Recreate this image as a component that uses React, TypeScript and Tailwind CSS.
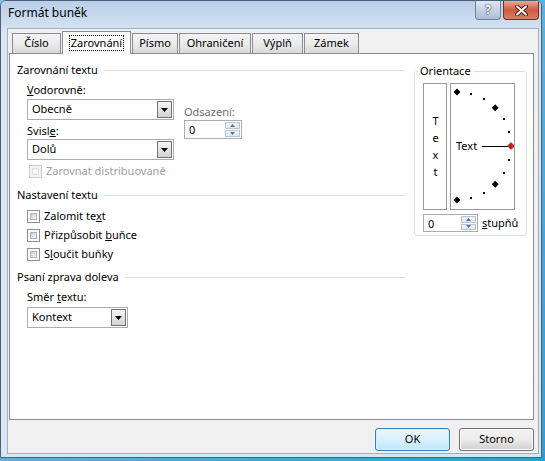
import React from 'react';

function Tab({ label, className, active }: { label: string; className: string; active?: boolean }) {
  if (active) {
    return (
      <div className={`relative z-10 h-[23px] bg-white border border-b-0 border-[#898c95] flex items-start justify-center pt-[3px] ${className}`}>
        <span className="border border-dotted border-black px-px leading-[14px]">{label}</span>
      </div>
    );
  }
  return (
    <div className={`h-[20px] mb-px border border-b-0 border-[#898c95] bg-gradient-to-b from-[#f4f4f4] via-[#ebebeb] to-[#d9d9d9] flex items-center justify-center ${className}`}>
      {label}
    </div>
  );
}

function GroupHead({ children, className = '' }: { children: React.ReactNode; className?: string }) {
  return (
    <div className={`flex items-center h-[16px] ${className}`}>
      <span>{children}</span>
      <div className="flex-1 h-px bg-[#d5dfe5] ml-[6px]" />
    </div>
  );
}

function Combo({ value, className }: { value: string; className: string }) {
  return (
    <div className={`flex items-center h-[21px] bg-white border border-[#a9aeb6] pl-[4px] pr-px ${className}`}>
      <span className="flex-1">{value}</span>
      <div className="w-[15px] h-[17px] border border-[#727272] bg-gradient-to-b from-[#f6f6f6] to-[#d3d3d3] flex items-center justify-center">
        <svg width="7" height="4" viewBox="0 0 7 4">
          <path d="M0 0h7L3.5 4z" fill="#000" />
        </svg>
      </div>
    </div>
  );
}

function Spin({ className }: { className: string }) {
  return (
    <div className={`flex bg-white border border-[#abadb3] ${className}`}>
      <span className="flex-1 pl-[4px] leading-[17px]">0</span>
      <div className="flex flex-col w-[15px] my-px mr-px gap-px">
        <div className="flex-1 border border-[#b8c4d3] bg-gradient-to-b from-[#f3f6fa] to-[#dce6f1] flex items-center justify-center">
          <svg width="5" height="3" viewBox="0 0 5 3">
            <path d="M2.5 0L5 3H0z" fill="#5a6f8e" />
          </svg>
        </div>
        <div className="flex-1 border border-[#b8c4d3] bg-gradient-to-b from-[#f3f6fa] to-[#dce6f1] flex items-center justify-center">
          <svg width="5" height="3" viewBox="0 0 5 3">
            <path d="M0 0h5L2.5 3z" fill="#5a6f8e" />
          </svg>
        </div>
      </div>
    </div>
  );
}

function Check({ children, className = '', disabled }: { children: React.ReactNode; className?: string; disabled?: boolean }) {
  return (
    <div className={`flex items-center h-[16px] ${className}`}>
      <div className={`w-[13px] h-[13px] border p-[2px] ${disabled ? 'border-[#c9c9c9] bg-[#f4f4f4]' : 'border-[#8e8f8f] bg-white'}`}>
        <div className={`w-full h-full border ${disabled ? 'border-[#e1e1e1] bg-[#f4f4f4]' : 'border-[#aeb3b9] bg-gradient-to-br from-[#cbcfd5] to-[#f6f6f6]'}`} />
      </div>
      <span className={`ml-[4px] ${disabled ? 'text-[#a0a0a0]' : ''}`}>{children}</span>
    </div>
  );
}

function Dial() {
  const cx = 6;
  const cy = 62;
  const r = 54;
  const angles = [90, 75, 60, 45, 30, 15, 0, -15, -30, -45, -60, -75, -90];
  return (
    <svg width="63" height="125" viewBox="0 0 63 125" className="block">
      {angles.map((a) => {
        const x = cx + r * Math.cos((a * Math.PI) / 180);
        const y = cy - r * Math.sin((a * Math.PI) / 180);
        if (a === 0) {
          return <polygon key={a} points={`${x},${y - 3.5} ${x + 3.5},${y} ${x},${y + 3.5} ${x - 3.5},${y}`} fill="#c41e1e" stroke="#7a1010" strokeWidth="0.5" />;
        }
        if (a % 45 === 0) {
          return <polygon key={a} points={`${x},${y - 3.5} ${x + 3.5},${y} ${x},${y + 3.5} ${x - 3.5},${y}`} fill="#000" />;
        }
        return <rect key={a} x={Math.round(x) - 1} y={Math.round(y) - 1} width="2" height="2" fill="#000" />;
      })}
      <text x="5" y="66" fontSize="11" fontFamily="Noto Sans, sans-serif" fill="#000">Text</text>
      <line x1="31" y1="62.5" x2="57" y2="62.5" stroke="#000" strokeWidth="1" />
    </svg>
  );
}

export default function App() {
  return (
    <div className="w-[545px] h-[461px] bg-gradient-to-br from-[#7cc8ea] to-[#2f9dd4] font-['Noto_Sans',sans-serif] text-[11px] text-black">
      <div className="w-[542px] h-[458px] flex flex-col border border-[#4f6075] rounded-t-[6px] bg-[#dae5f2] overflow-hidden">
        {/* title bar */}
        <div className="h-[27px] flex items-start bg-gradient-to-b from-[#b8cfe9] to-[#d3e1f1]">
          <span className="ml-[7px] mt-[4px] text-[12px] leading-[16px]">Formát buněk</span>
          <div className="ml-auto mr-[2px] flex gap-[2px]">
            <div className="w-[26px] h-[19px] rounded-b-[4px] border border-t-0 border-[#6f829b] bg-gradient-to-b from-[#dfe8f2] via-[#c3d2e4] to-[#aebfd6] flex items-center justify-center text-white font-bold text-[12px] leading-none [text-shadow:0_0_2px_#2a3a50,0_0_1px_#2a3a50]">
              ?
            </div>
            <div className="w-[36px] h-[19px] rounded-b-[4px] border border-t-0 border-[#7d2b1e] bg-gradient-to-b from-[#e9a996] via-[#cf5a40] to-[#d4826a] flex items-center justify-center">
              <svg width="13" height="11" viewBox="0 0 13 11">
                <path d="M2 1.5L11 9.5M11 1.5L2 9.5" stroke="#4a1a10" strokeWidth="4" strokeLinecap="round" />
                <path d="M2 1.5L11 9.5M11 1.5L2 9.5" stroke="#fff" strokeWidth="2.2" strokeLinecap="round" />
              </svg>
            </div>
          </div>
        </div>

        {/* client area */}
        <div className="flex-1 ml-[6px] mr-[2px] mb-[3px] border border-[#9fb0c4] bg-[#f0f0f0] flex flex-col">
          <div className="flex items-end gap-px pl-[4px] mt-[2px] -mb-px">
            <Tab label="Číslo" className="w-[49px]" />
            <Tab label="Zarovnání" className="w-[69px]" active />
            <Tab label="Písmo" className="w-[46px]" />
            <Tab label="Ohraničení" className="w-[72px]" />
            <Tab label="Výplň" className="w-[51px]" />
            <Tab label="Zámek" className="w-[55px]" />
          </div>

          {/* tab panel */}
          <div className="ml-px w-[525px] h-[367px] bg-white border border-[#898c95] flex items-start pl-[7px]">
            <div className="w-[388px] pt-[8px] flex flex-col">
              <GroupHead>Zarovnání textu</GroupHead>
              <div className="pl-[10px] flex mt-[4px]">
                <div className="flex flex-col">
                  <span className="h-[16px] leading-[16px]"><span className="underline">V</span>odorovně:</span>
                  <Combo value="Obecně" className="mt-px w-[147px]" />
                  <span className="mt-[3px] h-[16px] leading-[16px]">Svisl<span className="underline">e</span>:</span>
                  <Combo value="Dolů" className="w-[147px]" />
                </div>
                <div className="ml-[10px] mt-[22px] flex flex-col">
                  <span className="h-[16px] leading-[16px] text-[#6d6d6d]">Odsazení:</span>
                  <Spin className="w-[58px] h-[19px]" />
                </div>
              </div>
              <Check disabled className="mt-[3px] ml-[12px]">Zarovnat distribuovaně</Check>

              <GroupHead className="mt-[8px]">Nastavení textu</GroupHead>
              <Check className="mt-[5px] ml-[10px]">Zalomit te<span className="underline">x</span>t</Check>
              <Check className="mt-[3px] ml-[10px]">Přizpůsobit <span className="underline">b</span>uňce</Check>
              <Check className="mt-[3px] ml-[10px]">S<span className="underline">l</span>oučit buňky</Check>

              <GroupHead className="mt-[7px]">Psaní zprava doleva</GroupHead>
              <span className="mt-[4px] ml-[10px] h-[16px] leading-[16px]">Směr <span className="underline">t</span>extu:</span>
              <Combo value="Kontext" className="mt-[2px] ml-[10px] w-[101px]" />
            </div>

            {/* orientation */}
            <fieldset className="ml-[9px] mt-[9px] w-[113px] border border-[#d5dfe5] rounded-[3px] pl-[8px] pb-[3px]">
              <legend className="-ml-[5px] px-[2px] leading-[16px]">Orientace</legend>
              <div className="flex gap-[3px] mt-[4px]">
                <div className="w-[24px] h-[127px] border border-[#9a9a9a] flex items-center justify-center">
                  <span className="[writing-mode:vertical-lr] [text-orientation:upright] tracking-[2px] leading-[22px]">Text</span>
                </div>
                <div className="w-[65px] h-[127px] border border-[#9a9a9a]">
                  <Dial />
                </div>
              </div>
              <div className="flex items-center mt-[4px]">
                <Spin className="w-[55px] h-[18px]" />
                <span className="ml-[4px]"><span className="underline">s</span>tupňů</span>
              </div>
            </fieldset>
          </div>

          {/* buttons */}
          <div className="flex justify-end gap-[9px] pr-[4px] mt-[8px]">
            <button className="w-[75px] h-[23px] rounded-[3px] border border-[#3c7fb1] bg-gradient-to-b from-[#eaf6fd] via-[#d9f0fc] to-[#bee6fd] shadow-[inset_0_0_0_1px_#d6effc]">
              OK
            </button>
            <button className="w-[75px] h-[23px] rounded-[3px] border border-[#707070] bg-gradient-to-b from-[#f2f2f2] via-[#ebebeb] to-[#cfcfcf] shadow-[inset_0_0_0_1px_#fcfcfc]">
              Storno
            </button>
          </div>
        </div>
      </div>
    </div>
  );
}
